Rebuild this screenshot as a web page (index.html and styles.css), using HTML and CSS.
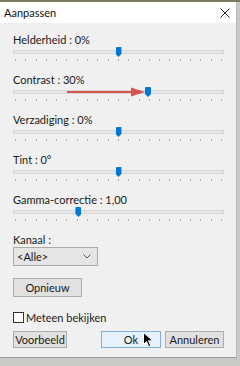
FILE: index.html
```html
<!DOCTYPE html>
<html lang="nl">
<head>
  <meta charset="UTF-8">
  <title>Aanpassen</title>
  <link rel="stylesheet" href="styles.css">
</head>
<body>
  <div class="screen">
    <div class="window">
      <div class="titlebar">
        <span class="title">Aanpassen</span>
        <svg class="close" width="10" height="10" viewBox="0 0 10 10">
          <path d="M0.5 0.5 L9.5 9.5 M9.5 0.5 L0.5 9.5" stroke="#222" stroke-width="1" fill="none"/>
        </svg>
      </div>

      <div class="content">
        <div class="slider-group">
          <div class="label">Helderheid : 0%</div>
          <div class="slider">
            <div class="track"></div>
            <div class="thumb" style="left: 50%"></div>
            <div class="ticks"></div>
          </div>
        </div>

        <div class="slider-group">
          <div class="label">Contrast : 30%</div>
          <div class="slider">
            <div class="track"></div>
            <svg class="arrow" width="78" height="10" viewBox="0 0 78 10">
              <path d="M0 5 L68 5" stroke="#d9534f" stroke-width="2"/>
              <path d="M64 0.5 L78 5 L64 9.5 Z" fill="#d9534f"/>
            </svg>
            <div class="thumb" style="left: 64%"></div>
            <div class="ticks"></div>
          </div>
        </div>

        <div class="slider-group">
          <div class="label">Verzadiging : 0%</div>
          <div class="slider">
            <div class="track"></div>
            <div class="thumb" style="left: 50%"></div>
            <div class="ticks"></div>
          </div>
        </div>

        <div class="slider-group">
          <div class="label">Tint : 0°</div>
          <div class="slider">
            <div class="track"></div>
            <div class="thumb" style="left: 50%"></div>
            <div class="ticks"></div>
          </div>
        </div>

        <div class="slider-group">
          <div class="label">Gamma-correctie : 1,00</div>
          <div class="slider">
            <div class="track"></div>
            <div class="thumb" style="left: 31%"></div>
            <div class="ticks"></div>
          </div>
        </div>

        <div class="label">Kanaal :</div>
        <div class="select">
          <span>&lt;Alle&gt;</span>
          <svg width="8" height="5" viewBox="0 0 8 5">
            <path d="M0.5 0.5 L4 4 L7.5 0.5" stroke="#555" stroke-width="1" fill="none"/>
          </svg>
        </div>

        <button class="btn btn-reset">Opnieuw</button>

        <label class="check-row">
          <span class="checkbox"></span>
          Meteen bekijken
        </label>

        <div class="button-row">
          <button class="btn btn-preview">Voorbeeld</button>
          <div class="right-buttons">
            <button class="btn btn-ok">Ok</button>
            <button class="btn btn-cancel">Annuleren</button>
          </div>
        </div>

        <svg class="cursor" width="11" height="16" viewBox="0 0 11 16">
          <path d="M0.5 0.5 L0.5 12.5 L3.5 9.5 L5.8 14.8 L7.8 14 L5.6 8.8 L9.8 8.8 Z" fill="#000" stroke="#fff" stroke-width="1"/>
        </svg>
      </div>
    </div>
  </div>

  <script>
    document.querySelectorAll(".ticks").forEach(function (row) {
      for (let i = 0; i < 21; i++) {
        const tick = document.createElement("span");
        row.appendChild(tick);
      }
    });
  </script>
</body>
</html>
```

FILE: styles.css
```css
* {
  margin: 0;
  padding: 0;
  box-sizing: border-box;
}

body {
  width: 240px;
  height: 366px;
  overflow: hidden;
  font-family: Lato, 'Open Sans', sans-serif;
  font-size: 11px;
  color: #1a1a1a;
  background: #c9cac4;
}

.screen {
  height: 366px;
  border-top: 2px solid #7d7a60;
}

.window {
  width: 237px;
  height: 356px;
  background-color: #f0f0f0;
  border-right: 1px solid #b8b8b8;
  border-bottom: 1px solid #9a9a9a;
}

.titlebar {
  height: 21px;
  background-color: #fff;
  display: flex;
  align-items: center;
  justify-content: space-between;
  padding: 0 6px 0 4px;
}

.title {
  font-size: 11px;
  color: #111;
}

.close {
  display: block;
}

.content {
  position: relative;
  padding: 10px 12px 0 13px;
}

.slider-group {
  height: 40px;
}

.label {
  height: 14px;
  line-height: 14px;
  white-space: nowrap;
}

.slider {
  position: relative;
  height: 26px;
}

.track {
  position: absolute;
  left: 0;
  right: 0;
  top: 3px;
  height: 4px;
  background-color: #e7e7e7;
  border: 1px solid #d6d6d6;
}

.thumb {
  position: absolute;
  top: 0;
  width: 6px;
  height: 10px;
  margin-left: -3px;
  background-color: #0078d7;
  border-radius: 1px 1px 0 0;
  clip-path: polygon(0 0, 100% 0, 100% 70%, 50% 100%, 0 70%);
}

.arrow {
  position: absolute;
  left: 54px;
  top: 0;
}

.ticks {
  position: absolute;
  left: 2px;
  right: 2px;
  top: 12px;
  display: flex;
  justify-content: space-between;
}

.ticks span {
  width: 1px;
  height: 2px;
  background-color: #b0b0b0;
}

.select {
  width: 85px;
  height: 19px;
  display: flex;
  align-items: center;
  justify-content: space-between;
  padding: 0 6px 0 3px;
  background-color: #e5e5e5;
  border: 1px solid #acacac;
}

.btn {
  font-family: inherit;
  font-size: 11px;
  color: #1a1a1a;
  background-color: #e1e1e1;
  border: 1px solid #adadad;
  height: 17px;
}

.btn-reset {
  display: block;
  width: 69px;
  height: 19px;
  margin-top: 12px;
}

.check-row {
  display: flex;
  align-items: center;
  gap: 2px;
  height: 12px;
  margin-top: 14px;
}

.checkbox {
  width: 11px;
  height: 11px;
  background-color: #fff;
  border: 1px solid #333;
}

.button-row {
  display: flex;
  justify-content: space-between;
  margin-top: 8px;
}

.right-buttons {
  display: flex;
  gap: 4px;
}

.btn-preview {
  width: 54px;
}

.btn-ok {
  width: 60px;
  background-color: #e5f1fb;
  border-color: #7fb1dc;
}

.btn-cancel {
  width: 59px;
}

.cursor {
  position: absolute;
  left: 143px;
  top: 309px;
}
```
